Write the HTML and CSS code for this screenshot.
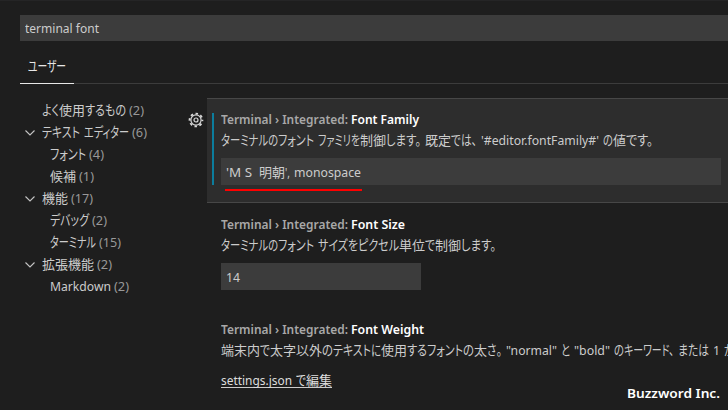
FILE: index.html
```html
<!DOCTYPE html>
<html lang="ja">
<head>
<meta charset="utf-8">
<title>Settings</title>
<link rel="stylesheet" href="styles.css">
</head>
<body>
<div class="settings">
  <header class="header">
    <div class="search"><span data-w="74">terminal font</span></div>
    <div class="tabs"><div class="tab"><span data-w="38">ユーザー</span></div></div>
  </header>
  <div class="content">
    <nav class="tree">
      <div class="row"><span data-w="17">よく</span><span data-w="26">使用</span><span data-w="41">するもの</span><span class="count" data-w="15">(2)</span></div>
      <div class="row group"><svg class="chev" viewBox="0 0 10 6"><path d="M.5 .5 5 5 9.500 .5"/></svg><span data-w="38">テキスト</span><span class="sp"></span><span data-w="45">エディター</span><span class="count" data-w="15">(6)</span></div>
      <div class="row child"><span data-w="36">フォント</span><span class="count" data-w="15">(4)</span></div>
      <div class="row child"><span data-w="26">候補</span><span class="count" data-w="15">(1)</span></div>
      <div class="row group"><svg class="chev" viewBox="0 0 10 6"><path d="M.5 .5 5 5 9.500 .5"/></svg><span data-w="26">機能</span><span class="count" data-w="22">(17)</span></div>
      <div class="row child"><span data-w="39">デバッグ</span><span class="count" data-w="15">(2)</span></div>
      <div class="row child"><span data-w="46">ターミナル</span><span class="count" data-w="22">(15)</span></div>
      <div class="row group"><svg class="chev" viewBox="0 0 10 6"><path d="M.5 .5 5 5 9.500 .5"/></svg><span data-w="52">拡張機能</span><span class="count" data-w="15">(2)</span></div>
      <div class="row child"><span data-w="61">Markdown</span><span class="count" data-w="15">(2)</span></div>
    </nav>
    <div class="gutter">
      <svg class="gear" viewBox="0 0 16 16"><circle cx="8" cy="8" r="6.400" class="teeth"/><circle cx="8" cy="8" r="5.100"/><circle cx="8" cy="8" r="2"/></svg>
    </div>
    <main class="list">
      <section class="item focused">
        <div class="modified">
          <h2><span class="cat" data-w="127">Terminal › Integrated:</span><b data-w="68">Font Family</b></h2>
          <p><span data-w="57">ターミナルの</span><span data-w="36">フォント</span><span class="sp"></span><span data-w="42">ファミリを</span><span data-w="26">制御</span><span class="stop" data-w="35">します。</span><span data-w="26">既定</span><span class="stop" data-w="26">では、</span><span data-w="118">'#editor.fontFamily#'</span><span class="sp"></span><span data-w="10">の</span><span data-w="13">値</span><span data-w="27">です。</span></p>
          <div class="input"><span data-w="26">'M S</span><span class="gap"></span><span data-w="26">明朝</span><span data-w="5">',</span><span class="sp"></span><span data-w="67">monospace</span><i class="mark"></i></div>
        </div>
      </section>
      <section class="item">
        <h2><span class="cat" data-w="127">Terminal › Integrated:</span><b data-w="54">Font Size</b></h2>
        <p><span data-w="57">ターミナルの</span><span data-w="36">フォント</span><span class="sp"></span><span data-w="40">サイズを</span><span data-w="41">ピクセル</span><span data-w="26">単位</span><span data-w="10">で</span><span data-w="26">制御</span><span data-w="35">します。</span></p>
        <div class="input short"><span data-w="14">14</span></div>
      </section>
      <section class="item">
        <h2><span class="cat" data-w="127">Terminal › Integrated:</span><b data-w="73">Font Weight</b></h2>
        <p><span data-w="39">端末内</span><span data-w="10">で</span><span data-w="52">太字以外</span><span data-w="11">の</span><span data-w="38">テキスト</span><span data-w="10">に</span><span data-w="26">使用</span><span data-w="20">する</span><span data-w="36">フォント</span><span data-w="11">の</span><span data-w="13">太</span><span class="stop" data-w="15">さ。</span><span data-w="51">"normal"</span><span class="sp"></span><span data-w="9">と</span><span class="sp"></span><span data-w="36">"bold"</span><span class="sp"></span><span data-w="10">の</span><span class="stop" data-w="50">キーワード、</span><span data-w="31">または</span><span class="sp"></span><span data-w="7">1</span><span class="sp"></span><span data-w="20">から</span></p>
        <a class="link"><span data-w="71">settings.json</span><span class="sp"></span><span data-w="10">で</span><span data-w="26">編集</span></a>
      </section>
    </main>
  </div>
  <div class="brand"><span data-w="93">Buzzword Inc.</span></div>
</div>
<script src="fit.js"></script>
</body>
</html>
```
FILE: styles.css
```css
* { box-sizing: border-box; }
body {
  margin: 0;
  background: #1e1e1e;
  color: #cccccc;
  font: 13px/22px "Noto Sans", "Noto Sans CJK JP", sans-serif;
}
.settings {
  width: 728px;
  height: 410px;
  overflow: hidden;
  border-top: 1px solid #252526;
  position: relative;
}
[data-w] {
  display: inline-block;
  flex: none;
  white-space: pre;
  transform-origin: 0 50%;
  font-feature-settings: "palt";
}
.kana { font-size: 14px; }
.header { padding: 14px 0 0 20px; }
.search {
  display: flex;
  height: 26px;
  padding: 2px 5px;
  background: #3c3c3c;
  color: #cccccc;
}
.tabs {
  display: flex;
  height: 43px;
  margin-top: 1px;
  background: linear-gradient(#3c3c3c, #3c3c3c) 0 41px / 100% 1px no-repeat;
}
.tab {
  width: 54px;
  height: 42px;
  padding: 13px 8px 0;
  border-bottom: 1px solid #e7e7e7;
  color: #e7e7e7;
}
.content { display: flex; margin-top: 13px; }
.tree { width: 188px; padding: 1px 0 0 25px; }
.row { display: flex; height: 22px; padding-left: 17px; }
.group { padding-left: 0; }
.child { padding-left: 25px; }
.count { color: #989898; margin-left: 3px; }
.chev { width: 10px; height: 6px; margin: 9px 7px 0 0; overflow: visible; }
.chev path { fill: none; stroke: #c5c5c5; stroke-width: 1.100; }
.gutter { width: 19px; padding-top: 14px; }
.gear { display: block; width: 16px; height: 16px; }
.gear circle { fill: none; stroke: #d8d8d8; stroke-width: 1.200; }
.gear .teeth { stroke-width: 1.900; stroke-dasharray: 2.500 2.527; stroke-dashoffset: 1.250; }
.list { flex: 1; min-width: 0; }
.item { height: 105px; padding: 12px 7px 0 14px; }
.focused {
  background: #2d2d2d;
  border: solid #474747;
  border-width: 1px 0;
  padding: 14px 7px 0 5px;
}
.modified {
  height: 72px;
  padding-left: 7px;
  border-left: 2px solid #0c7d9d;
}
h2 {
  display: flex;
  gap: 3px;
  height: 16px;
  margin: 0;
  font-size: 13px;
  line-height: 12px;
  font-weight: 600;
}
h2 b { color: #ffffff; font-weight: 600; }
.cat { color: #a8a8a8; }
p { display: flex; margin: 0; height: 29px; }
.sp { flex: none; width: 4px; }
.gap { flex: none; width: 7px; }
.stop { margin-right: 4px; }
.input {
  position: relative;
  display: flex;
  height: 27px;
  padding: 3px 5px;
  background: #3c3c3c;
  color: #cccccc;
}
.item > h2 { height: 19px; line-height: 18px; }
.item > p { height: 28px; }
.short { width: 200px; margin-top: 1px; }
.mark {
  position: absolute;
  left: 4px;
  top: 31px;
  width: 137px;
  height: 2px;
  background: #ff0000;
}
.link {
  display: flex;
  width: 111px;
  height: 19px;
  margin-top: 2px;
  border-bottom: 1px solid #cccccc;
  color: #dddddd;
}
.brand {
  position: absolute;
  left: 627px;
  top: 381px;
  color: #ffffff;
  font-weight: 600;
}
```
FILE: fit.js
```js
document.fonts.ready.then(() => {
  document.querySelectorAll('[data-w]').forEach((el) => {
    if (/[\u3040-\u30ff]/.test(el.textContent)) el.classList.add('kana');
    const target = Number(el.dataset.w);
    const natural = el.getBoundingClientRect().width;
    el.style.width = target + 'px';
    el.style.transform = `scaleX(${target / natural})`;
  });
});
```
